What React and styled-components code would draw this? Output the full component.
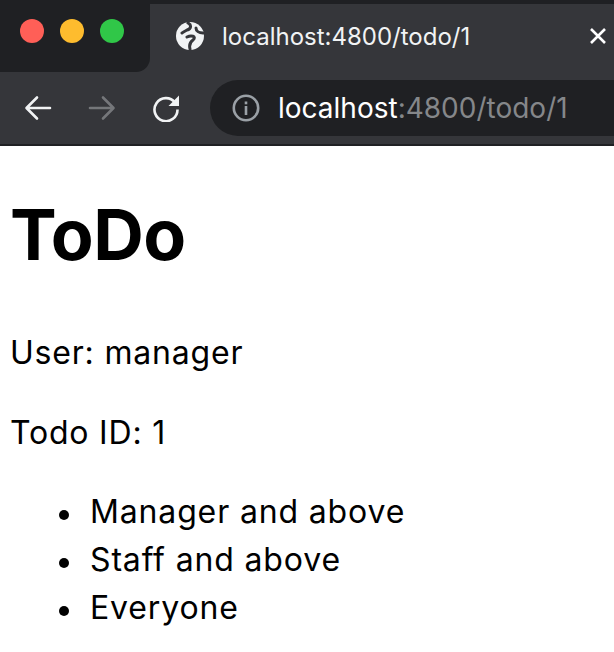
import React from "react";
import styled, { createGlobalStyle } from "styled-components";

const GlobalStyle = createGlobalStyle`
  html, body {
    margin: 0;
    padding: 0;
    background: #fff;
  }
  body {
    font-family: Inter, "Liberation Sans", sans-serif;
    color: #000;
    overflow: hidden;
  }
`;

const GlobeIcon = () => (
  <svg width="28" height="28" viewBox="0 0 28 28">
    <circle cx="14" cy="14" r="14" fill="#f1f3f4" />
    <g stroke="#35363a" strokeWidth="3" strokeLinecap="round" fill="none">
      <path d="M12 1 C16 3 15 7 11 8 C9 9 7 10 6 11" />
      <path d="M11 15 C15 13 21 14 17 18 C14 20 13 23 14 27" />
      <path d="M20 6 C20 9 23 11 27 11" />
    </g>
  </svg>
);

const CloseIcon = () => (
  <svg width="16" height="16" viewBox="0 0 16 16">
    <path d="M1 1 L15 15 M15 1 L1 15" stroke="#fff" strokeWidth="2.6" fill="none" />
  </svg>
);

const ArrowIcon = ({ flip, color }) => (
  <svg width="28" height="28" viewBox="0 0 28 28" style={{ transform: flip ? "scaleX(-1)" : "none" }}>
    <path
      d="M26 14 H3 M13 3.5 L2.5 14 L13 24.5"
      stroke={color}
      strokeWidth="2.6"
      strokeLinecap="round"
      strokeLinejoin="round"
      fill="none"
    />
  </svg>
);

const ReloadIcon = () => (
  <svg width="28" height="28" viewBox="0 0 28 28">
    <path d="M23 8.5 A11.5 11.5 0 1 0 25.5 15.5" stroke="#f1f3f4" strokeWidth="2.6" fill="none" />
    <path d="M27 1.5 V12 H16.5 Z" fill="#f1f3f4" />
  </svg>
);

const InfoIcon = () => (
  <svg width="28" height="28" viewBox="0 0 28 28">
    <circle cx="14" cy="14" r="12.2" stroke="#9aa0a6" strokeWidth="2.6" fill="none" />
    <rect x="12.7" y="12" width="2.6" height="9" fill="#9aa0a6" />
    <rect x="12.7" y="7.5" width="2.6" height="2.8" fill="#9aa0a6" />
  </svg>
);

export default function App() {
  return (
    <>
      <GlobalStyle />
      <Chrome>
        <TabStrip>
          <Lights>
            <Light color="#ff5f57" />
            <Light color="#febc2e" />
            <Light color="#30c748" />
          </Lights>
          <Tab>
            <GlobeIcon />
            <TabTitle>localhost:4800/todo/1</TabTitle>
            <CloseIcon />
          </Tab>
        </TabStrip>
        <Toolbar>
          <NavIcons>
            <ArrowIcon color="#f1f3f4" />
            <ArrowIcon flip color="#75777a" />
            <ReloadIcon />
          </NavIcons>
          <AddressBar>
            <InfoIcon />
            <Url>
              <Host>localhost</Host>
              <UrlRest>:4800/todo/1</UrlRest>
            </Url>
          </AddressBar>
        </Toolbar>
      </Chrome>
      <Page>
        <Title>ToDo</Title>
        <Para>User: manager</Para>
        <Para>Todo ID: 1</Para>
        <List>
          <Item>Manager and above</Item>
          <Item>Staff and above</Item>
          <Item>Everyone</Item>
        </List>
      </Page>
    </>
  );
}

const Chrome = styled.div`
  display: flex;
  flex-direction: column;
  background: #35363a;
  border-bottom: 2px solid #1f2023;
`;
const TabStrip = styled.div`
  display: flex;
  height: 72px;
`;
const Lights = styled.div`
  display: flex;
  gap: 16px;
  width: 150px;
  flex-shrink: 0;
  padding: 19px 0 0 20px;
  box-sizing: border-box;
  background: #1f2023;
  border-bottom-right-radius: 14px;
`;
const Light = styled.span`
  width: 24px;
  height: 24px;
  border-radius: 50%;
  background: ${(props) => props.color};
`;
const Tab = styled.div`
  flex: 1;
  display: flex;
  align-items: center;
  gap: 18px;
  padding: 0 8px 4px 26px;
  background: #35363a;
  border-top: 4px solid #1f2023;
`;
const TabTitle = styled.span`
  flex: 1;
  font-size: 24px;
  color: #f1f3f4;
  white-space: nowrap;
`;
const Toolbar = styled.div`
  display: flex;
  align-items: center;
  height: 72px;
  padding: 0 0 0 24px;
`;
const NavIcons = styled.div`
  display: flex;
  gap: 36px;
  align-items: center;
  width: 186px;
  flex-shrink: 0;
`;
const AddressBar = styled.div`
  flex: 1;
  display: flex;
  align-items: center;
  gap: 18px;
  height: 56px;
  padding-left: 22px;
  background: #1f2023;
  border-radius: 28px 0 0 28px;
`;
const Url = styled.span`
  font-size: 28px;
  white-space: nowrap;
`;
const Host = styled.span`
  color: #fff;
`;
const UrlRest = styled.span`
  color: #85878a;
`;
const Page = styled.main`
  padding: 0 0 0 10px;
`;
const Title = styled.h1`
  margin: 43px 0 48px;
  font-size: 70px;
  line-height: 92px;
  font-weight: 700;
  letter-spacing: -0.5px;
`;
const Para = styled.p`
  margin: 32px 0 0;
  font-size: 32px;
  line-height: 48px;
  letter-spacing: 0.8px;
`;
const List = styled.ul`
  margin: 31px 0 0;
  padding: 0 0 0 49px;
  list-style: none;
  font-size: 32px;
  line-height: 48px;
  letter-spacing: 0.85px;
`;
const Item = styled.li`
  display: flex;
  align-items: center;
  gap: 21px;

  &::before {
    content: "";
    width: 10px;
    height: 10px;
    margin-top: 5px;
    border-radius: 50%;
    background: #000;
  }
`;
